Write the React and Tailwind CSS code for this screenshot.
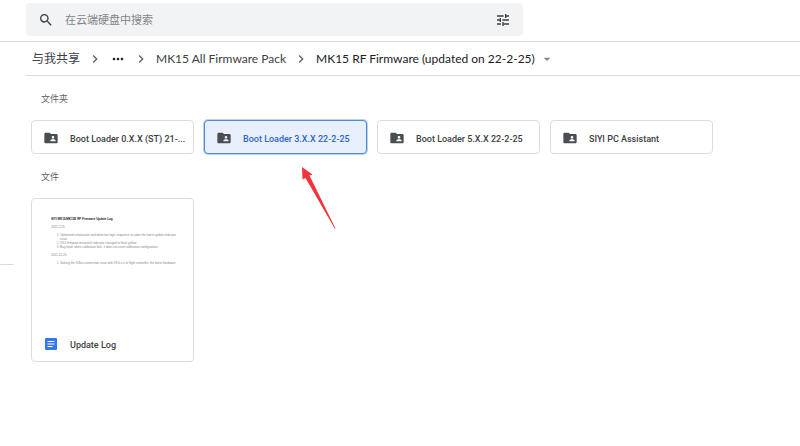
import { MdArrowDropDown, MdChevronRight, MdFolderShared, MdMoreHoriz, MdSearch, MdTune } from "react-icons/md";

const folders = [
  { name: "Boot Loader 0.X.X (ST) 21-..." },
  { name: "Boot Loader 3.X.X 22-2-25", selected: true },
  { name: "Boot Loader 5.X.X 22-2-25" },
  { name: "SIYI PC Assistant" },
];

function SearchBar() {
  return (
    <form className="flex items-center w-full max-w-[497px] h-[33px] rounded bg-[#f1f3f4] px-3" onSubmit={(e) => e.preventDefault()}>
      <button type="submit" aria-label="搜索" className="text-[#3c4043]">
        <MdSearch size={16} />
      </button>
      <input
        type="text"
        aria-label="在云端硬盘中搜索"
        placeholder="在云端硬盘中搜索"
        className="flex-1 min-w-0 ml-[11px] pt-1 bg-transparent text-[11px] text-[#3c4043] placeholder:text-[#80868b] outline-none"
      />
      <button type="button" aria-label="搜索选项" className="text-[#3c4043]">
        <MdTune size={16} />
      </button>
    </form>
  );
}

function Breadcrumbs() {
  return (
    <nav className="flex items-center gap-[7px] h-[34px] pl-1.5 border-b border-[#dadce0] font-['Lato','Noto_Sans_CJK_SC',sans-serif] text-[12px] text-[#3c4043] whitespace-nowrap">
      <a href="#shared">与我共享</a>
      <MdChevronRight size={16} className="text-[#5f6368]" />
      <button type="button" aria-label="显示路径" className="text-[#202124]">
        <MdMoreHoriz size={16} />
      </button>
      <MdChevronRight size={16} className="text-[#5f6368]" />
      <a href="#pack">MK15 All Firmware Pack</a>
      <MdChevronRight size={16} className="text-[#5f6368]" />
      <button type="button" className="flex items-center gap-1 text-[#202124]">
        MK15 RF Firmware (updated on 22-2-25)
        <MdArrowDropDown size={16} className="text-[#80868b]" />
      </button>
    </nav>
  );
}

function FolderCard({ name, selected }) {
  return (
    <div className="relative">
      <button
        type="button"
        aria-pressed={!!selected}
        className={`flex items-center gap-[11px] w-full h-[34px] pl-[11px] pr-1 pt-0.5 rounded border text-[9px] leading-3 font-medium ${
          selected ? "bg-[#e8f0fe] border-[#4f8ad2] ring-1 ring-[#b9d2f3]" : "bg-white border-[#dadce0] text-[#3c4043]"
        }`}
      >
        <MdFolderShared size={16} className="shrink-0 text-[#4a4e52]" />
        <span className={`truncate pt-0.5 ${selected ? "text-[#2f64c8]" : ""}`}>{name}</span>
      </button>
      {selected && (
        <svg className="absolute left-[98px] top-[47px] pointer-events-none" width="34" height="64" viewBox="0 0 34 64" aria-hidden="true">
          <path d="M0 0 L10.5 7.5 L7.5 8.5 L33.5 61.5 L33 62 L3.5 11 L0.5 12.5 Z" fill="#f5333a" />
        </svg>
      )}
    </div>
  );
}

function DocPreview() {
  return (
    <div className="flex-1 pl-[19px] pr-2.5 pt-[18px] text-left text-[3px] leading-[4px] font-normal text-[#80868b] font-['Liberation_Sans',sans-serif]">
      <p className="font-bold text-[#202124]">SIYI MK15/MK15E RF Firmware Update Log</p>
      <p className="mt-1">2022-2-25</p>
      <ol className="mt-1 pl-[9px] list-decimal">
        <li>
          Optimized initialization and detection logic sequence to solve the latest update indicator
          <br />
          issue
        </li>
        <li>V3.0 firmware mismatch indicator changed to flash yellow</li>
        <li>Bug fixed: when calibration fails, it does not reset calibration configuration</li>
      </ol>
      <p className="mt-1">2021-12-20</p>
      <ol className="mt-1 pl-[9px] list-decimal">
        <li>Solving the S.Bus connection issue with V3.0.x.x to flight controller, the latest hardware</li>
      </ol>
    </div>
  );
}

function DocIcon() {
  return (
    <svg width="12" height="12" viewBox="0 0 12 12" className="shrink-0" aria-hidden="true">
      <rect width="12" height="12" rx="1" fill="#3577f0" />
      <path d="M2.5 3.5h7M2.5 6h7M2.5 8.5h5" stroke="#fff" strokeWidth="1.2" />
    </svg>
  );
}

export default function App() {
  return (
    <div className="min-h-screen bg-white font-['Roboto','Noto_Sans_CJK_SC',sans-serif] text-[#3c4043]">
      <header className="pl-[26px] pr-4 pt-[3px] pb-[5px] border-b border-[#dadce0]">
        <SearchBar />
      </header>
      <div className="flex">
        <aside className="w-[26px] shrink-0 pt-[222px]">
          <hr className="w-3.5 border-[#dadce0]" />
        </aside>
        <main className="flex-1 min-w-0">
          <Breadcrumbs />
          <section className="pl-[5px] pt-4">
            <h2 className="pl-2.5 text-[9px] leading-[14px] text-[#5f6368]">文件夹</h2>
            <div className="mt-3.5 grid grid-cols-[repeat(auto-fill,163px)] gap-2.5">
              {folders.map((folder) => (
                <FolderCard key={folder.name} {...folder} />
              ))}
            </div>
          </section>
          <section className="pl-[5px] pt-4">
            <h2 className="pl-2.5 text-[9px] leading-[14px] text-[#5f6368]">文件</h2>
            <div className="mt-3.5 grid grid-cols-[repeat(auto-fill,163px)] gap-2.5">
              <button type="button" className="flex flex-col h-[164px] rounded border border-[#dadce0] bg-white">
                <DocPreview />
                <span className="flex items-center gap-[13px] w-full h-[34px] pl-[13px] text-[9px] leading-3 font-medium">
                  <DocIcon />
                  <span className="pt-0.5">Update Log</span>
                </span>
              </button>
            </div>
          </section>
        </main>
      </div>
    </div>
  );
}
